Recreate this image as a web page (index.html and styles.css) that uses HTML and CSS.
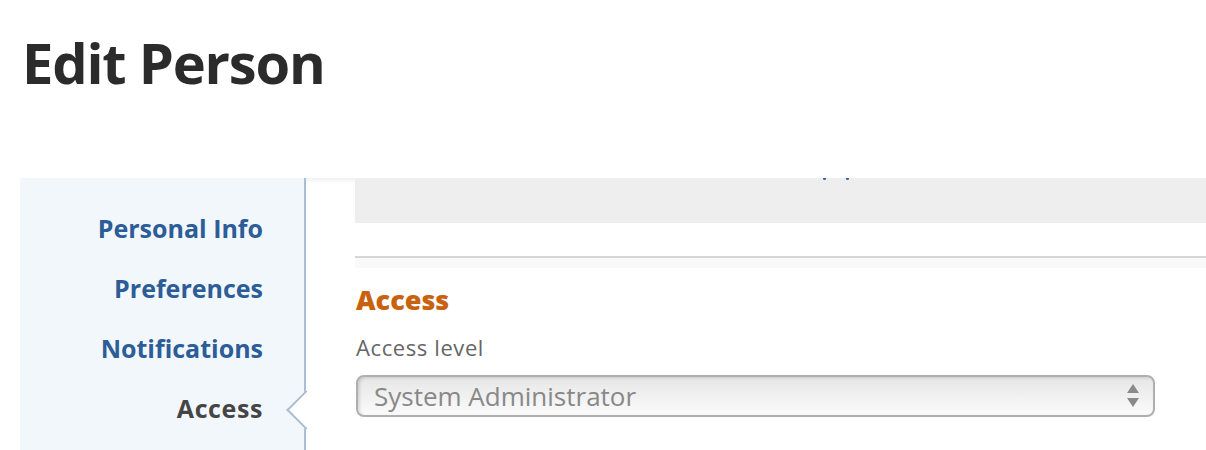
FILE: index.html
```html
<!DOCTYPE html>
<html lang="en">
<head>
<meta charset="utf-8">
<title>Edit Person</title>
<link rel="stylesheet" href="styles.css">
</head>
<body>
<h1 class="page-title">Edit Person</h1>
<div class="layout">
  <nav class="sidebar">
    <a class="nav-item" href="#">Personal Info</a>
    <a class="nav-item" href="#">Preferences</a>
    <a class="nav-item" href="#">Notifications</a>
    <a class="nav-item active" href="#">Access</a>
  </nav>
  <main class="content">
    <div class="grey-panel"><span class="dot dot-a"></span><span class="dot dot-b"></span></div>
    <div class="divider"></div>
    <h2 class="section-title">Access</h2>
    <label class="field-label">Access level</label>
    <div class="select">
      <span class="select-value">System Administrator</span>
      <svg class="select-arrows" width="12" height="24" viewBox="0 0 12 24">
        <polygon points="6,0 12,9 0,9" fill="#8a8a8a"/>
        <polygon points="0,14 12,14 6,23" fill="#8a8a8a"/>
      </svg>
    </div>
  </main>
</div>
</body>
</html>
```

FILE: styles.css
```css
html, body {
  margin: 0;
  padding: 0;
  background: #ffffff;
  overflow: hidden;
}

body {
  font-family: "Open Sans", "Lato", sans-serif;
  height: 450px;
}

.page-title {
  margin: 0;
  padding: 24px 0 0 22px;
  height: 150px;
  box-sizing: border-box;
  font-family: "Open Sans", sans-serif;
  font-weight: 700;
  font-size: 56px;
  letter-spacing: -1.2px;
  line-height: 76px;
  color: #2b2b2b;
}

.layout {
  display: flex;
  margin: 28px 0 0 20px;
  height: 272px;
}

.sidebar {
  width: 284px;
  flex: none;
  background: #f2f7fc;
  border-right: 2px solid #a9bed2;
  display: flex;
  flex-direction: column;
  padding-top: 21px;
}

.nav-item {
  position: relative;
  display: block;
  height: 60px;
  line-height: 58px;
  text-align: right;
  padding-right: 41px;
  font-size: 25px;
  font-weight: 700;
  color: #2c5d98;
  text-decoration: none;
}

.nav-item.active {
  color: #454545;
  letter-spacing: 0.6px;
}

.nav-item.active::after {
  content: "";
  position: absolute;
  right: -16px;
  top: 17px;
  width: 26px;
  height: 26px;
  background: #ffffff;
  border-left: 2px solid #a9bed2;
  border-bottom: 2px solid #a9bed2;
  transform: rotate(45deg);
}

.content {
  flex: 1;
  padding-left: 49px;
  box-shadow: inset 0 5px 5px -3px rgba(0, 0, 0, 0.08);
  position: relative;
  z-index: 1;
}

.grey-panel {
  height: 45px;
  background: #eeeeee;
  position: relative;
}

.dot {
  position: absolute;
  top: 0;
  width: 3px;
  height: 2px;
  border-radius: 0 0 2px 2px;
  background: #3a5f98;
}

.dot-a { left: 468px; }
.dot-b { left: 491px; }

.divider {
  margin-top: 33px;
  height: 10px;
  border-top: 2px solid #d6d6d6;
  background: #f9f9f9;
}

.section-title {
  margin: 17px 0 0 1px;
  font-size: 27px;
  font-weight: 800;
  line-height: 30px;
  color: #c8620f;
}

.field-label {
  display: block;
  margin: 18px 0 0 1px;
  font-size: 22px;
  letter-spacing: 0.6px;
  line-height: 28px;
  color: #666666;
}

.select {
  margin: 14px 0 0 1px;
  width: 799px;
  height: 42px;
  box-sizing: border-box;
  border: 2px solid #afafaf;
  border-radius: 8px;
  background: linear-gradient(#e6e6e6, #fbfbfb);
  box-shadow: inset 2px 1px 3px rgba(0, 0, 0, 0.12);
  display: flex;
  align-items: center;
  justify-content: space-between;
  padding: 0 14px 0 16px;
}

.select-value {
  font-size: 26px;
  color: #888888;
}

.select-arrows {
  display: block;
}
```
